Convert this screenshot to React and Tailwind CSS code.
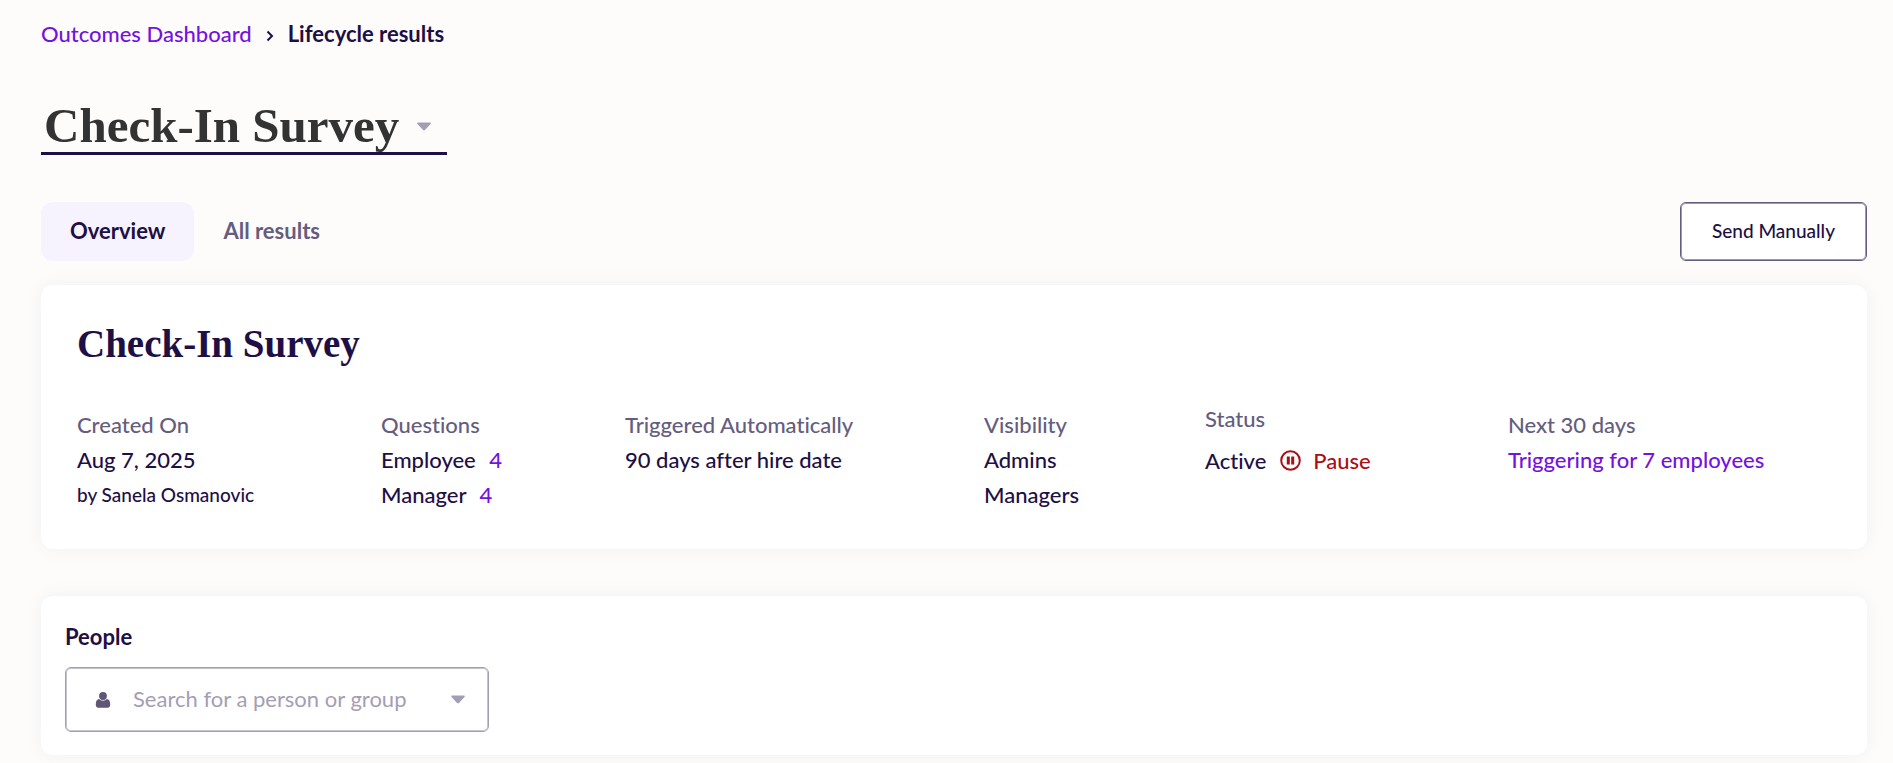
import { useState } from "react";

const people = [
  { label: "Employee", count: 4 },
  { label: "Manager", count: 4 },
];

function Caret({ className }) {
  return (
    <svg className={className} width="14" height="9" viewBox="0 0 14 9" fill="currentColor" aria-hidden="true">
      <path d="M1.2 0.5h11.6c.9 0 1.300 1 .7 1.600L8 7.900c-.6.6-1.400.6-2 0L.5 2.100C-.1 1.500.3.5 1.200.5z" />
    </svg>
  );
}

function PauseIcon() {
  return (
    <svg width="21" height="21" viewBox="0 0 21 21" fill="none" aria-hidden="true">
      <circle cx="10.500" cy="10.500" r="9.300" stroke="currentColor" strokeWidth="2" />
      <path d="M6.800 6.500h3v8h-3zM11.200 6.500h3v8h-3z" fill="currentColor" />
    </svg>
  );
}

function PersonIcon() {
  return (
    <svg className="shrink-0 text-[#5d5677]" width="16" height="16" viewBox="0 0 16 16" fill="currentColor" aria-hidden="true">
      <circle cx="8" cy="4" r="3.900" />
      <path d="M4.200 7C5.200 8.100 6.500 8.700 8 8.700s2.800-.6 3.800-1.700c2.300.2 3.400 2.400 3.400 5.200 0 2.200-.8 3.500-2.400 3.500H3.200C1.600 15.700.8 14.400.8 12.200.8 9.400 1.900 7.200 4.200 7z" />
    </svg>
  );
}

function Column({ title, children }) {
  return (
    <div>
      <h3 className="text-[#655d7e]">{title}</h3>
      {children}
    </div>
  );
}

export default function App() {
  const [tab, setTab] = useState("overview");
  const [survey, setSurvey] = useState("check-in");
  const [search, setSearch] = useState("");
  const [paused, setPaused] = useState(false);

  const tabClass = (name) =>
    "h-[59px] rounded-xl px-[29px] pb-0.5 font-bold " +
    (tab === name ? "bg-[#f6f3fe] text-[#1e0f45]" : "text-[#655d7e]");

  return (
    <div className="min-h-screen bg-[#fdfcfb] pt-4 pr-[26px] pb-2 pl-[41px] font-['Lato',sans-serif] text-[22px] leading-[35px] text-[#1e0f45] [font-variant-ligatures:none]">
      <nav aria-label="Breadcrumb" className="flex items-center">
        <a href="#outcomes" className="font-medium text-[#7512df]">Outcomes Dashboard</a>
        <svg className="mx-3.5 mt-1" width="8" height="12" viewBox="0 0 8 12" fill="none" stroke="currentColor" strokeWidth="2" aria-hidden="true">
          <path d="M1.500 1.500L6 6l-4.500 4.500" />
        </svg>
        <span className="font-bold" aria-current="page">Lifecycle results</span>
      </nav>

      <div className="relative mt-[41px] w-[406px] border-b-[3px] border-[#1e0f45]">
        <select
          aria-label="Survey"
          value={survey}
          onChange={(e) => setSurvey(e.target.value)}
          className="block h-[60px] w-full appearance-none pt-1.5 pl-[3px] font-['Liberation_Serif',serif] text-[49px] leading-[56px] font-bold text-[#333333] outline-none"
        >
          <option value="check-in">Check-In Survey</option>
        </select>
        <Caret className="pointer-events-none absolute top-[30px] right-4 text-[#a49eb4]" />
      </div>

      <div className="mt-[47px] flex items-center justify-between">
        <div role="tablist" className="flex">
          <button role="tab" aria-selected={tab === "overview"} className={tabClass("overview")} onClick={() => setTab("overview")}>
            Overview
          </button>
          <button role="tab" aria-selected={tab === "results"} className={tabClass("results")} onClick={() => setTab("results")}>
            All results
          </button>
        </div>
        <button className="h-[59px] rounded-md border border-[#655d7e] bg-white px-[31px] pb-0.5 text-[19px] font-medium shadow-[inset_0_0_0_1px_#655d7ea0]">
          Send Manually
        </button>
      </div>

      <section className="mt-6 rounded-xl bg-white px-9 pt-[31px] pb-[37px] shadow-[0_0_20px_rgba(30,15,69,0.05)]">
        <h2 className="font-['Liberation_Serif',serif] text-[39px] leading-[56px] font-bold">Check-In Survey</h2>
        <div className="mt-[35px] grid grid-cols-[304fr_244fr_359fr_221fr_303fr_323fr] font-medium">
          <Column title="Created On">
            <p>Aug 7, 2025</p>
            <p className="text-[19px]">by Sanela Osmanovic</p>
          </Column>
          <Column title="Questions">
            {people.map((p) => (
              <p key={p.label}>
                {p.label} <a href="#questions" className="ml-2 text-[#7512df]">{p.count}</a>
              </p>
            ))}
          </Column>
          <Column title="Triggered Automatically">
            <p>90 days after hire date</p>
          </Column>
          <Column title="Visibility">
            <p>Admins</p>
            <p>Managers</p>
          </Column>
          <div className="-mt-1.5">
            <h3 className="text-[#655d7e]">Status</h3>
            <div className="mt-[7px] flex items-center">
              <span>{paused ? "Paused" : "Active"}</span>
              <button className="ml-3.5 flex items-center gap-3 text-[#a80f17]" onClick={() => setPaused(!paused)}>
                <PauseIcon />
                {paused ? "Resume" : "Pause"}
              </button>
            </div>
          </div>
          <Column title="Next 30 days">
            <a href="#upcoming" className="text-[#7512df]">Triggering for 7 employees</a>
          </Column>
        </div>
      </section>

      <section className="mt-[47px] rounded-xl bg-white px-6 pt-[23px] pb-[23px] shadow-[0_0_20px_rgba(30,15,69,0.05)]">
        <label htmlFor="people" className="block font-bold">People</label>
        <div className="mt-[13px] flex h-[65px] w-[424px] items-center rounded-md border border-[#a49eb4] pr-[23px] pl-[29px] shadow-[inset_0_0_0_1px_#a49eb4a0]">
          <PersonIcon />
          <input
            id="people"
            value={search}
            onChange={(e) => setSearch(e.target.value)}
            placeholder="Search for a person or group"
            className="ml-[22px] min-w-0 flex-1 pb-0.5 outline-none placeholder:text-[#a49eb4]"
          />
          <Caret className="shrink-0 text-[#a49eb4]" />
        </div>
      </section>
    </div>
  );
}
